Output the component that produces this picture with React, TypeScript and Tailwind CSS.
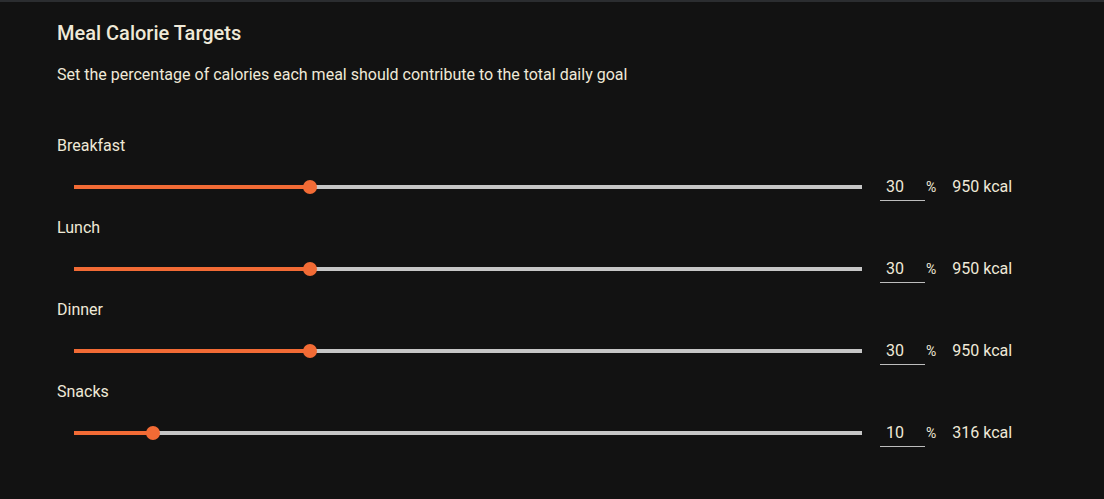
import React, { useState } from "react";

type Meal = { name: string; pct: number; kcal: number };

function Slider({ value }: { value: number }) {
  return (
    <div className="relative h-[14px] w-[788px] flex items-center">
      <div className="h-[4px] w-full bg-[#c6c6c6]" />
      <div
        className="absolute left-0 top-[5px] h-[4px] bg-[#f26b35]"
        style={{ width: `${value}%` }}
      />
      <div
        className="absolute top-0 h-[14px] w-[14px] -ml-[7px] rounded-full bg-[#f26b35]"
        style={{ left: `${value}%` }}
      />
    </div>
  );
}

export default function App() {
  const [meals] = useState<Meal[]>([
    { name: "Breakfast", pct: 30, kcal: 950 },
    { name: "Lunch", pct: 30, kcal: 950 },
    { name: "Dinner", pct: 30, kcal: 950 },
    { name: "Snacks", pct: 10, kcal: 316 },
  ]);

  return (
    <div
      className="min-h-screen w-full bg-[#121212] border-t-2 border-[#2b2d30] text-[#efe9d8]"
      style={{ fontFamily: "Roboto, 'Noto Sans', sans-serif" }}
    >
      <div className="px-[57px] pt-[17px] pb-8">
        <h2 className="text-xl leading-7 font-medium">Meal Calorie Targets</h2>
        <p className="mt-[16px] text-base leading-6">
          Set the percentage of calories each meal should contribute to the total daily goal
        </p>

        <div className="mt-[49px] flex flex-col gap-[15px]">
          {meals.map((m) => (
            <div key={m.name}>
              <div className="text-base leading-5">{m.name}</div>
              <div className="mt-[15px] flex items-center h-8">
                <div className="ml-[17px]">
                  <Slider value={m.pct} />
                </div>
                <div className="ml-[18px] w-[45px] h-[28px] border-b border-[#bdbdbd] flex items-center pl-[6px] text-base">
                  {m.pct}
                </div>
                <span className="ml-[1px] text-sm">%</span>
                <span className="ml-[16px] text-base">{m.kcal} kcal</span>
              </div>
            </div>
          ))}
        </div>
      </div>
    </div>
  );
}
